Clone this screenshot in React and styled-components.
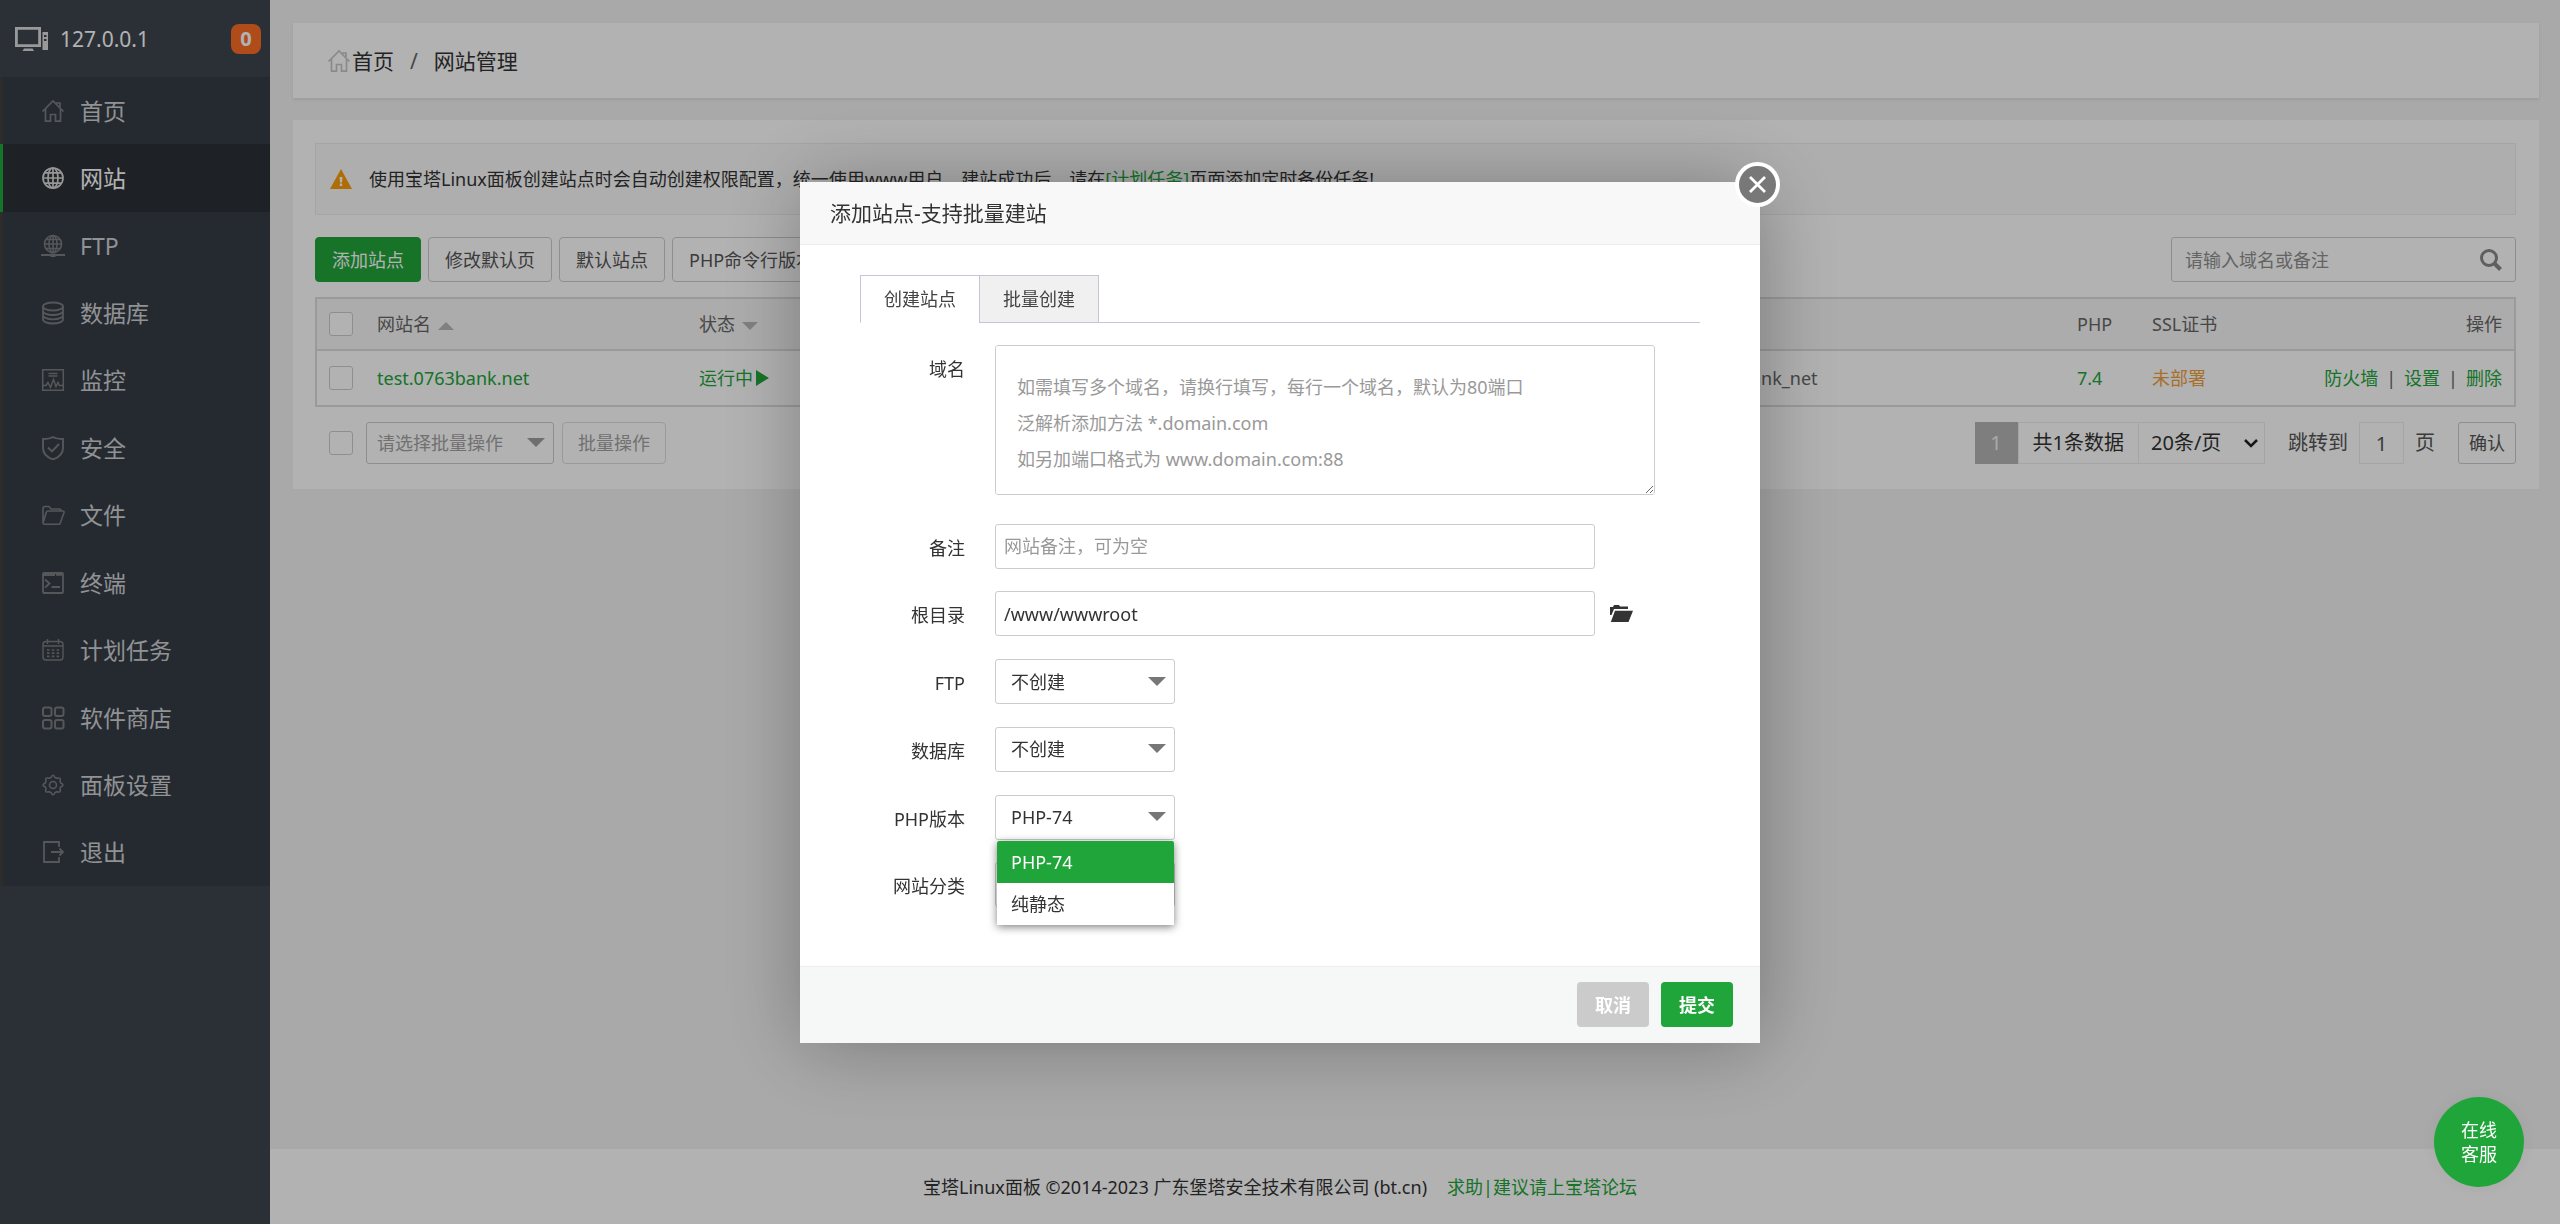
import React, { useState } from 'react'
import styled, { createGlobalStyle, css } from 'styled-components'

const GlobalStyle = createGlobalStyle`
  * {
    box-sizing: border-box;
  }

  body {
    margin: 0;
    background: #f2f2f2;
    color: #333;
    font-family: 'Noto Sans', 'Noto Sans CJK SC', sans-serif;
    font-size: 18px;
    line-height: 24px;
  }

  button,
  input,
  select,
  textarea {
    font: inherit;
    color: inherit;
  }

  button {
    cursor: pointer;
  }
`

const GREEN = '#20a53a'

/* ---------- page frame ---------- */

const Page = styled.div`
  display: flex;
  min-height: 100vh;
`

const Sidebar = styled.aside`
  flex: 0 0 270px;
  background: #3d454e;
`

const SidebarHead = styled.div`
  display: flex;
  align-items: center;
  height: 77px;
  padding: 0 9px 0 15px;
  color: #fff;
  font-size: 21px;
`

const HostName = styled.span`
  flex: 1;
  padding-left: 12px;
`

const Badge = styled.span`
  width: 30px;
  height: 30px;
  border-radius: 8px;
  background: #fc6d26;
  color: #fff;
  font-size: 20px;
  font-weight: 700;
  line-height: 30px;
  text-align: center;
`

const Menu = styled.nav`
  display: flex;
  flex-direction: column;
  min-height: 809px;
`

const MenuItem = styled.a`
  display: flex;
  flex: 1;
  align-items: center;
  gap: 15px;
  padding-left: 38px;
  border-left: 3px solid #403f3d;
  background: #363d47;
  color: #d0d1d3;
  font-size: 23px;
  text-decoration: none;

  svg {
    color: #7b7d80;
  }

  ${({ $active }) =>
    $active &&
    css`
      border-left-color: ${GREEN};
      background: #2c3137;
      color: #fff;

      svg {
        color: #d8d8d8;
      }
    `}
`

const Main = styled.main`
  display: flex;
  flex: 1;
  flex-direction: column;
  min-width: 0;
`

const Content = styled.div`
  display: flex;
  flex: 1;
  flex-direction: column;
  gap: 22px;
  padding: 23px 21px 0 23px;
`

const Breadcrumb = styled.nav`
  display: flex;
  align-items: center;
  height: 75px;
  padding-left: 34px;
  background: #fff;
  box-shadow: 0 2px 3px rgba(0, 0, 0, 0.08);
  color: #333;
  font-size: 21px;

  a {
    display: flex;
    align-items: center;
    gap: 1px;
    color: inherit;
    text-decoration: none;
  }

  svg {
    color: #c6c6c6;
  }
`

const Slash = styled.span`
  padding: 0 16px;
  color: #666;
`

const Card = styled.section`
  padding: 23px 23px 25px 22px;
  background: #fff;
`

const Notice = styled.div`
  display: flex;
  align-items: center;
  gap: 17px;
  height: 72px;
  padding-left: 14px;
  border: 1px solid #ececec;
  background: #fafafa;
`

const Link = styled.a`
  color: ${GREEN};
  text-decoration: none;
`

const Toolbar = styled.div`
  display: flex;
  gap: 7px;
  margin: 22px 0 15px;
`

const Button = styled.button`
  height: 45px;
  padding: 0 16px;
  border: 1px solid ${({ $primary }) => ($primary ? GREEN : '#ccc')};
  border-radius: 4px;
  background: ${({ $primary }) => ($primary ? GREEN : '#fff')};
  color: ${({ $primary }) => ($primary ? '#fff' : '#555')};
`

const Search = styled.form`
  display: flex;
  align-items: center;
  width: 345px;
  height: 45px;
  margin-left: auto;
  padding: 0 13px;
  border: 1px solid #ccc;
  border-radius: 3px;

  input {
    flex: 1;
    min-width: 0;
    padding: 0;
    border: 0;
    outline: 0;
    background: none;
  }

  input::placeholder {
    color: #909090;
    opacity: 1;
  }

  button {
    display: flex;
    padding: 0;
    border: 0;
    background: none;
    color: #888;
  }
`

/* ---------- site table ---------- */

const Table = styled.table`
  width: 100%;
  border: 2px solid #ddd;
  border-spacing: 0;
  table-layout: fixed;
  color: #666;
  text-align: left;

  th,
  td {
    padding: 0 12px;
    font-weight: 400;
    white-space: nowrap;
  }

  th {
    height: 52px;
    border-bottom: 2px solid #ddd;
    background: #f6f6f6;
  }

  td {
    height: 54px;
  }
`

const Col = styled.col`
  width: ${({ $width }) => ($width ? `${$width}px` : 'auto')};
`

const Split = styled.div`
  display: flex;
  justify-content: space-between;
`

const Divider = styled.span`
  padding: 0 8px;
`

const Pending = styled.a`
  color: #f0a03c;
  text-decoration: none;
`

const Check = styled.input.attrs({ type: 'checkbox' })`
  display: block;
  width: 24px;
  height: 24px;
  margin: 0;
  border: 1px solid #ccc;
  border-radius: 3px;
  appearance: none;
  background: #fff;

  &:checked {
    background: ${GREEN};
  }
`

const Sort = styled.span`
  display: inline-block;
  margin-left: 7px;
  border: 8px solid transparent;
  border-top-width: ${({ $up }) => ($up ? 0 : '8px')};
  border-bottom-width: ${({ $up }) => ($up ? '8px' : 0)};
  border-top-color: #b8b8b8;
  border-bottom-color: #b8b8b8;
  vertical-align: middle;
`

const Running = styled.a`
  display: flex;
  align-items: center;
  gap: 3px;
  color: ${GREEN};
  text-decoration: none;
`

const BatchRow = styled.div`
  display: flex;
  align-items: center;
  gap: 8px;
  margin-top: 15px;
  padding-left: 14px;
`

const BatchButton = styled.button`
  height: 42px;
  padding: 0 15px;
  border: 1px solid #ddd;
  border-radius: 4px;
  background: #fff;
  color: #a2a2a2;
`

const Picker = styled.div`
  position: relative;
  width: ${({ $width }) => $width}px;

  select {
    display: block;
    width: 100%;
    height: ${({ $height }) => $height || 45}px;
    padding: 0 ${({ $pad }) => $pad || 15}px;
    border: 1px solid #ccc;
    border-radius: 3px;
    outline: 0;
    appearance: none;
    background: #fff;
    color: ${({ $muted }) => ($muted ? '#a2a2a2' : '#333')};
  }

  &::after {
    position: absolute;
    top: calc(50% - 5px);
    right: 9px;
    border: 9px solid transparent;
    border-top-color: ${({ $muted }) => ($muted ? '#a0a0a0' : '#777')};
    border-bottom: 0;
    content: '';
    pointer-events: none;
  }
`

const BatchPicker = styled(Picker)`
  margin-left: 5px;
`

const Pager = styled.div`
  display: flex;
  align-items: center;
  margin-left: auto;
  font-size: 20px;
`

const PageNow = styled.span`
  width: 43px;
  height: 42px;
  background: #b5b5b5;
  color: #f2f2f2;
  line-height: 42px;
  text-align: center;
`

const PageCount = styled.span`
  height: 42px;
  padding: 0 14px;
  border: 1px solid #ececec;
  line-height: 40px;
`

const PageSize = styled.div`
  position: relative;
  display: flex;
  align-items: center;
  width: 126px;

  select {
    width: 100%;
    height: 42px;
    padding: 0 12px;
    border: 1px solid #ececec;
    border-left: 0;
    appearance: none;
    background: none;
  }

  svg {
    position: absolute;
    right: 6px;
    pointer-events: none;
  }
`

const Jump = styled.label`
  display: flex;
  align-items: center;
  gap: 11px;
  margin: 0 23px;
  color: #555;

  input {
    width: 45px;
    height: 42px;
    padding: 0;
    border: 1px solid #ececec;
    outline: 0;
    background: none;
    text-align: center;
  }
`

const Confirm = styled.button`
  height: 42px;
  padding: 0 10px;
  border: 1px solid #ccc;
  border-radius: 3px;
  background: #fff;
  color: #555;
  font-size: 18px;
`

const Footer = styled.footer`
  display: flex;
  align-items: center;
  justify-content: center;
  gap: 20px;
  height: 75px;
  padding-right: 270px;
  background: #fff;
`

/* ---------- dialog ---------- */

const Shade = styled.div`
  position: fixed;
  inset: 0;
  display: flex;
  align-items: center;
  justify-content: center;
  background: rgba(0, 0, 0, 0.3);
`

const Dialog = styled.div`
  position: relative;
  width: 960px;
  max-width: 100%;
  background: #fff;
  box-shadow: 2px 2px 75px rgba(0, 0, 0, 0.3);
`

const DialogTitle = styled.h2`
  margin: 0;
  padding: 0 30px;
  border-bottom: 1px solid #eee;
  background: #f8f8f8;
  font-size: 21px;
  font-weight: 400;
  line-height: 62px;
`

const Close = styled.button`
  position: absolute;
  top: -20px;
  right: -20px;
  display: flex;
  align-items: center;
  justify-content: center;
  width: 45px;
  height: 45px;
  padding: 0;
  border: 4px solid #fff;
  border-radius: 50%;
  background: #787878;
  color: #fff;
`

const DialogBody = styled.div`
  padding: 30px 60px 58px;
`

const Tabs = styled.div`
  display: flex;
  height: 48px;
  margin-bottom: 22px;
  border-bottom: 1px solid #c8c4d6;
`

const Tab = styled.button`
  height: 48px;
  padding: 0 23px;
  border: 1px solid #c8c4d6;
  background: #f0f0f0;
  color: #444;

  ${({ $on }) =>
    $on &&
    css`
      border-right: 0;
      border-bottom-color: #fff;
      background: #fff;
    `}
`

const Fields = styled.div`
  display: flex;
  flex-direction: column;
  justify-content: space-between;
  min-height: 384px;
  margin-top: 29px;
`

const Row = styled.div`
  display: flex;
  height: ${({ $tall }) => ($tall ? '150px' : '45px')};

  > label {
    flex: 0 0 105px;
    margin-right: 30px;
    line-height: 48px;
    text-align: right;
  }
`

const control = css`
  border: 1px solid #ccc;
  border-radius: 3px;
  outline: 0;
  background: #fff;

  &::placeholder {
    color: #999;
    opacity: 1;
  }
`

const TextArea = styled.textarea`
  ${control}
  width: 660px;
  height: 150px;
  padding: 23px 21px;
  line-height: 36px;
`

const TextInput = styled.input`
  ${control}
  width: 600px;
  height: 45px;
  padding: 0 8px;
`

const FolderButton = styled.button`
  display: flex;
  align-items: center;
  margin-left: 15px;
  padding: 0;
  border: 0;
  background: none;
  color: #333;
`

const Options = styled.ul`
  position: absolute;
  z-index: 1;
  top: 46px;
  right: 1px;
  left: 2px;
  margin: 0;
  padding: 0;
  border-radius: 2px;
  background: #fff;
  box-shadow: 0 2px 8px rgba(0, 0, 0, 0.5);
  list-style: none;
`

const Option = styled.li`
  padding: 0 14px;
  border-radius: 2px 2px 0 0;
  background: ${({ $on }) => ($on ? GREEN : '#fff')};
  color: ${({ $on }) => ($on ? '#fff' : '#333')};
  line-height: 42px;
`

const DialogFoot = styled.div`
  display: flex;
  align-items: center;
  justify-content: flex-end;
  gap: 12px;
  height: 77px;
  padding-right: 27px;
  border-top: 1px solid #edefef;
  background: #f6f8f8;
`

const Action = styled.button`
  width: 72px;
  height: 45px;
  padding: 0;
  border: 0;
  border-radius: 4px;
  background: ${({ $primary }) => ($primary ? GREEN : '#cbcbcb')};
  color: #fff;
  font-weight: 700;
`

const Service = styled.button`
  position: fixed;
  right: 36px;
  bottom: 37px;
  width: 90px;
  height: 90px;
  padding: 0 24px;
  border: 0;
  border-radius: 50%;
  background: ${GREEN};
  box-shadow: 0 0 15px rgba(0, 0, 0, 0.05);
  color: #fff;
  line-height: 24px;
`

/* ---------- icons ---------- */

const Glyph = ({ children, size = 24, width = 1.6 }) => (
  <svg
    width={size}
    height={size}
    viewBox="0 0 24 24"
    fill="none"
    stroke="currentColor"
    strokeWidth={width}
    aria-hidden="true"
  >
    {children}
  </svg>
)

const HomeIcon = () => (
  <Glyph width={1.7}>
    <path d="M1.500 12.500 12 2l10.500 10.500M4.500 10v12.200h5v-6.700h5v6.700h5V10M15 4h4v4" />
  </Glyph>
)

const GlobeIcon = () => (
  <Glyph width={1.7}>
    <circle cx="12" cy="12" r="10" />
    <ellipse cx="12" cy="12" rx="5" ry="10" />
    <path d="M12 2v20M2 12h20M4 6.800h16M4 17.200h16" />
  </Glyph>
)

const FtpIcon = () => (
  <Glyph>
    <circle cx="12" cy="10" r="8.500" />
    <ellipse cx="12" cy="10" rx="4" ry="8.500" />
    <path d="M12 1.500v17M3.500 10h17M5 5.500h14M5 14.500h14" />
    <path d="M0 21h24M9 21h6" strokeWidth="2.200" />
    <path d="M9.500 21.300h5" strokeWidth="3.500" />
  </Glyph>
)

const DatabaseIcon = () => (
  <Glyph width={1.8}>
    <ellipse cx="12" cy="5.500" rx="10" ry="4" />
    <path d="M2 5.500v13c0 2.200 4.500 4 10 4s10-1.800 10-4v-13M2 10c0 2.200 4.500 4 10 4s10-1.800 10-4M2 14.300c0 2.200 4.500 4 10 4s10-1.800 10-4" />
  </Glyph>
)

const MonitorIcon = () => (
  <Glyph width={1.5}>
    <path d="M1.700 1.700h20.600v20.600H1.700zM7.500 5.500h9M7.500 8h9M2 17.500h3l2-3 2.500 5 3-8 2.500 7 2-4 1.500 3H22" />
  </Glyph>
)

const ShieldIcon = () => (
  <Glyph width={1.9}>
    <path d="M12 1C9 2.700 5 3 2 3v9c0 6 4.500 9.500 10 11.500C17.500 21.500 22 18 22 12V3c-3 0-7-.3-10-2zM7 11.500l4 4 7-7.500" />
  </Glyph>
)

const FolderIcon = () => (
  <Glyph width={1.6}>
    <path d="M2 20V5.500C2 4 2.500 3.500 4 3.500h4l2 2.500h8.500c1 0 1.500.5 1.500 2M2 20c0 1 .5 1.300 1.500 1.300h14c1 0 1.500-.3 1.800-1.300L23 9.500c.3-1-.3-1.500-1-1.500H7C6 8 5.500 8.500 5.200 9.500z" />
  </Glyph>
)

const TerminalIcon = () => (
  <Glyph width={1.8}>
    <rect x="2" y="2" width="20" height="20" rx="1" />
    <path d="M2 3.500h12" strokeWidth="3" />
    <path d="M15 3.800h6M4 8.500l4.500 4L4 16.500M10.500 16h8.500" />
  </Glyph>
)

const CalendarIcon = () => (
  <Glyph width={1.4}>
    <rect x="2" y="3.500" width="20" height="18.500" rx="3" />
    <path d="M6.500 1v5M17.500 1v5M2 8h20" />
    <path d="M6 12h13M6 15.200h13M6 18.400h13" strokeWidth="1.700" strokeDasharray="2.500 2.300" />
  </Glyph>
)

const AppsIcon = () => (
  <Glyph width={2}>
    <rect x="2" y="1.500" width="8.500" height="8.500" rx="2" />
    <rect x="14" y="1.500" width="8.500" height="8.500" rx="2" />
    <rect x="2" y="14" width="8.500" height="8.500" rx="2" />
    <rect x="14" y="14" width="8.500" height="8.500" rx="2" />
  </Glyph>
)

const GearIcon = () => (
  <Glyph width={1.6}>
    <circle cx="12" cy="12" r="3.500" />
    <path d="M10 4.500Q12 0 14 4.500l2 .8q4.500-1.500 3 3l.7 1.700q4.500 2 0 4l-.7 1.700q1.500 4.500-3 3l-2 .8q-2 4.500-4 0l-2-.8q-4.500 1.500-3-3L4.300 14q-4.500-2 0-4L5 8.300q-1.500-4.500 3-3z" />
  </Glyph>
)

const ExitIcon = () => (
  <Glyph width={1.8}>
    <path d="M18 7V2H3v20h15v-5M10 12h12M18.500 8.500 22 12l-3.500 3.500" />
  </Glyph>
)

const ComputerIcon = () => (
  <svg width="33" height="24" viewBox="0 0 33 24" fill="currentColor" color="#dcdcdc" aria-hidden="true">
    <path d="M0 0h26v20H0zM2.800 2.800v14.400h20.400V2.800z" fillRule="evenodd" />
    <path d="M9 21.500h8.500l1.500 2.500H7.500zM27.500 5H33v18h-5.500zM29 8v2h2.500V8zM29 12v2h2.500v-2z" fillRule="evenodd" />
  </svg>
)

const WarnIcon = () => (
  <svg width="22" height="20" viewBox="0 0 22 20" aria-hidden="true">
    <path d="M11 0 22 20H0z" fill="#fa9c0a" />
    <path d="M9.500 8h3l-.5 5.500h-2zM9.800 14.500h2.400v2.400H9.800z" fill="#fff" />
  </svg>
)

const SearchIcon = () => (
  <svg width="22" height="22" viewBox="0 0 22 22" fill="none" stroke="currentColor" aria-hidden="true">
    <circle cx="9" cy="9" r="7.500" strokeWidth="3" />
    <path d="m14.500 14.500 6 6" strokeWidth="4" />
  </svg>
)

const OpenFolderIcon = () => (
  <svg width="23" height="17" viewBox="0 0 23 17" fill="currentColor" aria-hidden="true">
    <path d="M0 10V2h3l1-2h5l1 1.500h8V4H4L1.500 10zM5 5.800h18L18.500 17H.8z" />
  </svg>
)

const menu = [
  ['首页', HomeIcon],
  ['网站', GlobeIcon],
  ['FTP', FtpIcon],
  ['数据库', DatabaseIcon],
  ['监控', MonitorIcon],
  ['安全', ShieldIcon],
  ['文件', FolderIcon],
  ['终端', TerminalIcon],
  ['计划任务', CalendarIcon],
  ['软件商店', AppsIcon],
  ['面板设置', GearIcon],
  ['退出', ExitIcon],
]

const phpVersions = ['PHP-74', '纯静态']

const domainHint = `如需填写多个域名，请换行填写，每行一个域名，默认为80端口
泛解析添加方法 *.domain.com
如另加端口格式为 www.domain.com:88`

const SideMenu = () => (
  <Sidebar>
    <SidebarHead>
      <ComputerIcon />
      <HostName>127.0.0.1</HostName>
      <Badge>0</Badge>
    </SidebarHead>
    <Menu>
      {menu.map(([name, Icon]) => (
        <MenuItem key={name} href="#" $active={name === '网站'}>
          <Icon />
          {name}
        </MenuItem>
      ))}
    </Menu>
  </Sidebar>
)

const SiteTable = () => (
  <Table>
    <colgroup>
      <Col $width={48} />
      <Col $width={322} />
      <Col />
      <Col $width={418} />
      <Col $width={75} />
      <Col $width={374} />
    </colgroup>
    <thead>
      <tr>
        <th>
          <Check aria-label="全选" />
        </th>
        <th>
          网站名
          <Sort $up />
        </th>
        <th>
          状态
          <Sort />
        </th>
        <th>备注</th>
        <th>PHP</th>
        <th>
          <Split>
            <span>SSL证书</span>
            <span>操作</span>
          </Split>
        </th>
      </tr>
    </thead>
    <tbody>
      <tr>
        <td>
          <Check aria-label="test.0763bank.net" />
        </td>
        <td>
          <Link href="#">test.0763bank.net</Link>
        </td>
        <td>
          <Running href="#">
            运行中
            <svg width="13" height="16" viewBox="0 0 13 16" fill="currentColor" aria-hidden="true">
              <path d="M0 0 13 8 0 16z" />
            </svg>
          </Running>
        </td>
        <td>test_0763bank_net</td>
        <td>
          <Link href="#">7.4</Link>
        </td>
        <td>
          <Split>
            <Pending href="#">未部署</Pending>
            <span>
              <Link href="#">防火墙</Link>
              <Divider>|</Divider>
              <Link href="#">设置</Link>
              <Divider>|</Divider>
              <Link href="#">删除</Link>
            </span>
          </Split>
        </td>
      </tr>
    </tbody>
  </Table>
)

const Paging = () => (
  <Pager>
    <PageNow>1</PageNow>
    <PageCount>共1条数据</PageCount>
    <PageSize>
      <select aria-label="每页条数">
        <option>20条/页</option>
      </select>
      <svg width="16" height="10" viewBox="0 0 16 10" fill="none" stroke="#222" strokeWidth="2.500" aria-hidden="true">
        <path d="m2 2 6 6 6-6" />
      </svg>
    </PageSize>
    <Jump>
      跳转到
      <input defaultValue="1" />
      页
    </Jump>
    <Confirm>确认</Confirm>
  </Pager>
)

const AddSite = () => {
  const [php, setPhp] = useState(phpVersions[0])

  return (
    <Shade>
      <Dialog role="dialog" aria-labelledby="dialog-title">
        <DialogTitle id="dialog-title">添加站点-支持批量建站</DialogTitle>
        <Close aria-label="关闭">
          <svg width="17" height="17" viewBox="0 0 17 17" stroke="currentColor" strokeWidth="2.800" aria-hidden="true">
            <path d="m1 1 15 15M16 1 1 16" />
          </svg>
        </Close>
        <DialogBody>
          <Tabs role="tablist">
            <Tab role="tab" aria-selected="true" $on>
              创建站点
            </Tab>
            <Tab role="tab" aria-selected="false">
              批量创建
            </Tab>
          </Tabs>
          <Row $tall>
            <label htmlFor="domain">域名</label>
            <TextArea id="domain" placeholder={domainHint} />
          </Row>
          <Fields>
            <Row>
              <label htmlFor="remark">备注</label>
              <TextInput id="remark" placeholder="网站备注，可为空" />
            </Row>
            <Row>
              <label htmlFor="path">根目录</label>
              <TextInput id="path" defaultValue="/www/wwwroot" />
              <FolderButton aria-label="选择目录">
                <OpenFolderIcon />
              </FolderButton>
            </Row>
            <Row>
              <label htmlFor="ftp">FTP</label>
              <Picker $width={180}>
                <select id="ftp">
                  <option>不创建</option>
                </select>
              </Picker>
            </Row>
            <Row>
              <label htmlFor="database">数据库</label>
              <Picker $width={180}>
                <select id="database">
                  <option>不创建</option>
                </select>
              </Picker>
            </Row>
            <Row>
              <label htmlFor="php">PHP版本</label>
              <Picker $width={180}>
                <select id="php" value={php} onChange={e => setPhp(e.target.value)}>
                  {phpVersions.map(name => (
                    <option key={name}>{name}</option>
                  ))}
                </select>
                <Options role="listbox" aria-label="PHP版本">
                  {phpVersions.map(name => (
                    <Option
                      key={name}
                      role="option"
                      aria-selected={name === php}
                      $on={name === php}
                      onClick={() => setPhp(name)}
                    >
                      {name}
                    </Option>
                  ))}
                </Options>
              </Picker>
            </Row>
            <Row>
              <label htmlFor="category">网站分类</label>
              <Picker $width={180}>
                <select id="category">
                  <option>默认分类</option>
                </select>
              </Picker>
            </Row>
          </Fields>
        </DialogBody>
        <DialogFoot>
          <Action>取消</Action>
          <Action $primary>提交</Action>
        </DialogFoot>
      </Dialog>
    </Shade>
  )
}

const App = () => (
  <>
    <GlobalStyle />
    <Page>
      <SideMenu />
      <Main>
        <Content>
          <Breadcrumb>
            <a href="#">
              <HomeIcon />
              首页
            </a>
            <Slash>/</Slash>
            <span>网站管理</span>
          </Breadcrumb>
          <Card>
            <Notice>
              <WarnIcon />
              <span>
                使用宝塔Linux面板创建站点时会自动创建权限配置，统一使用www用户。建站成功后，请在
                <Link href="#">[计划任务]</Link>
                页面添加定时备份任务!
              </span>
            </Notice>
            <Toolbar>
              <Button $primary>添加站点</Button>
              <Button>修改默认页</Button>
              <Button>默认站点</Button>
              <Button>PHP命令行版本</Button>
              <Search role="search">
                <input placeholder="请输入域名或备注" aria-label="请输入域名或备注" />
                <button type="button" aria-label="搜索">
                  <SearchIcon />
                </button>
              </Search>
            </Toolbar>
            <SiteTable />
            <BatchRow>
              <Check aria-label="批量选择" />
              <BatchPicker $width={188} $height={42} $pad={10} $muted>
                <select aria-label="批量操作">
                  <option>请选择批量操作</option>
                </select>
              </BatchPicker>
              <BatchButton>批量操作</BatchButton>
              <Paging />
            </BatchRow>
          </Card>
        </Content>
        <Footer>
          <span>宝塔Linux面板 ©2014-2023 广东堡塔安全技术有限公司 (bt.cn)</span>
          <Link href="#">求助|建议请上宝塔论坛</Link>
        </Footer>
      </Main>
    </Page>
    <AddSite />
    <Service>在线客服</Service>
  </>
)

export default App
